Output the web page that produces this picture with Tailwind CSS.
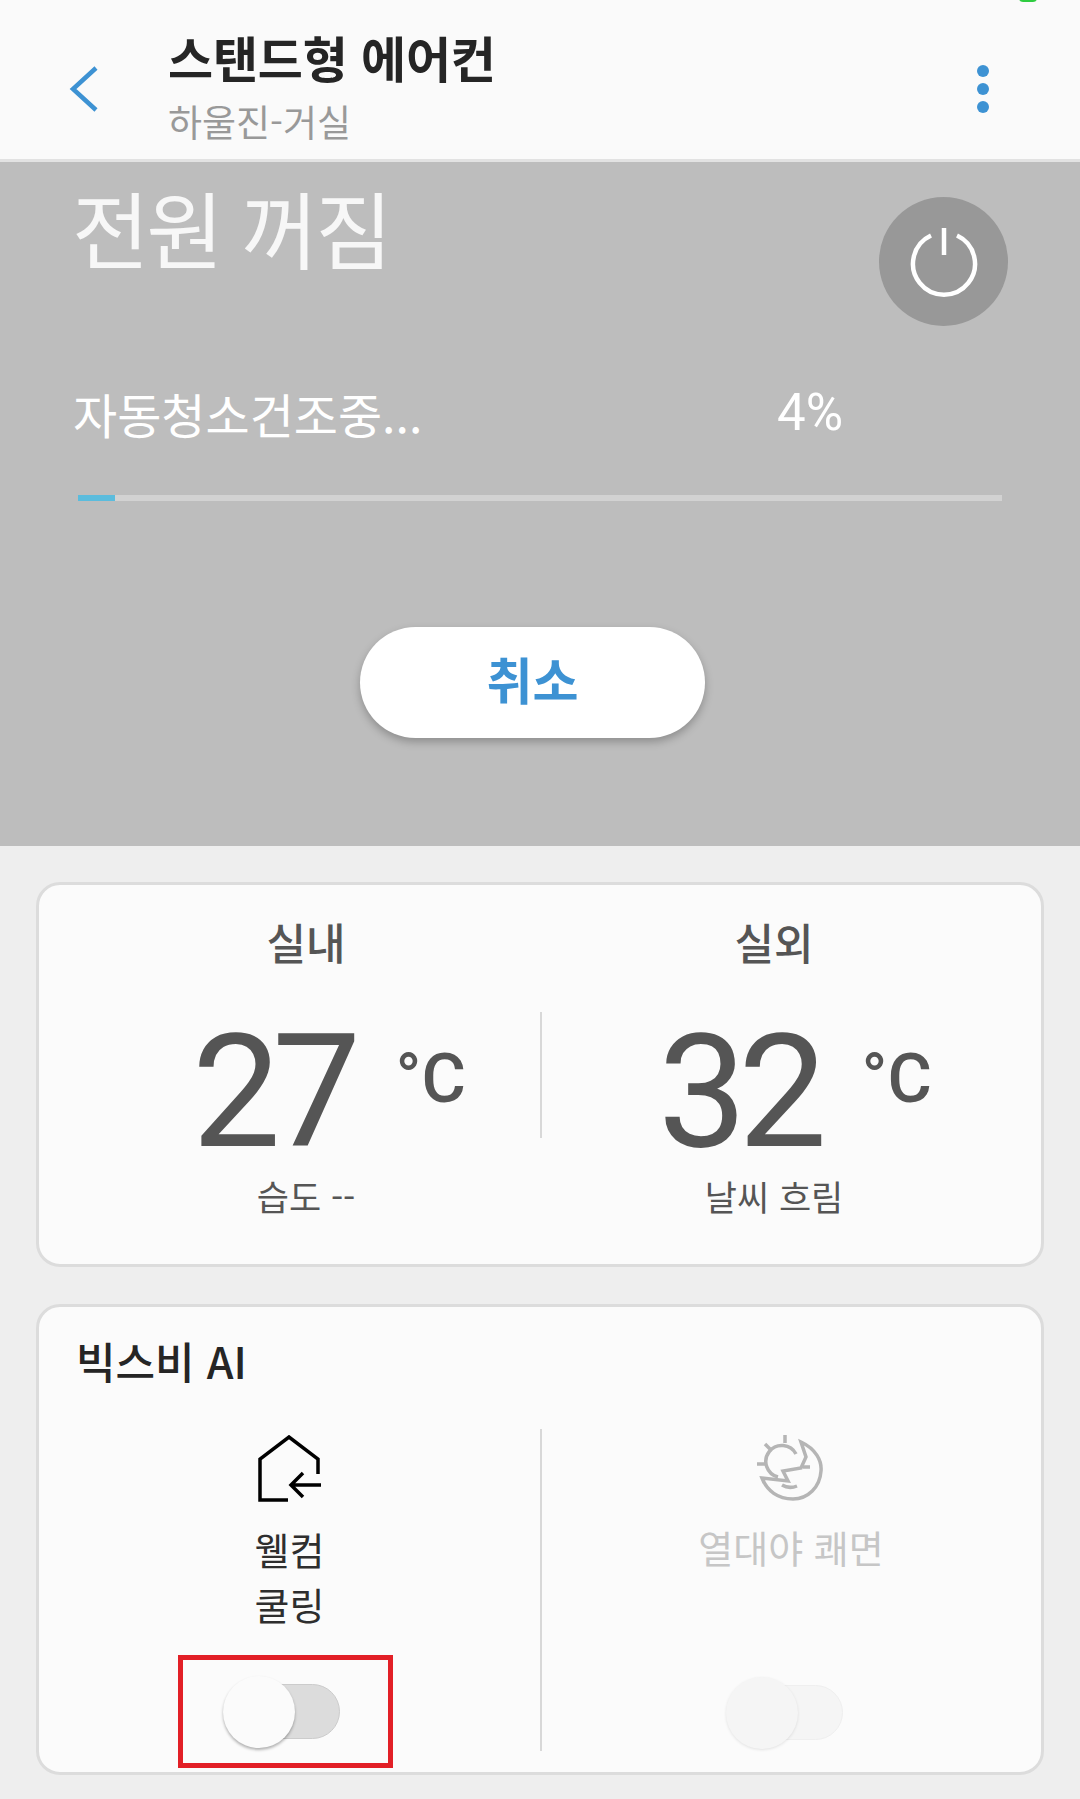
<!DOCTYPE html>
<html lang="ko">
<head>
    <meta charset="UTF-8">
    <meta name="viewport" content="width=device-width, initial-scale=1.0">
    <title>스탠드형 에어컨</title>
    <script src="https://cdn.jsdelivr.net/npm/@tailwindcss/browser@4"></script>
</head>
<body class="w-[1080px] h-[1799px] overflow-hidden bg-[#eeeeee] font-['Noto_Sans_CJK_KR','Noto_Sans',sans-serif]">

    <!-- header -->
    <header class="relative h-[162px] bg-[#fafafa] border-b-[3px] border-[#e2e2e2] flex items-start">
        <div class="absolute left-[1019px] top-[-6px] w-[18px] h-[8px] rounded-full bg-[#2ecc40]"></div>
        <svg class="mt-[66px] ml-[68px] w-[32px] h-[46px]" viewBox="0 0 32 46" fill="none" stroke="#3d92d3" stroke-width="4.5">
            <path d="M28 2 L5 23 L28 44" />
        </svg>
        <div class="ml-[68px] pt-[25px]">
            <div class="text-[49px] leading-[64px] font-bold tracking-[-0.2px] text-[#252525]">스탠드형 에어컨</div>
            <div class="mt-[10px] text-[37px] leading-[44px] text-[#999999]">하울진-거실</div>
        </div>
        <div class="ml-auto mr-[91px] mt-[65px] flex flex-col gap-[6px]">
            <div class="w-[12px] h-[12px] rounded-full bg-[#3d92d3]"></div>
            <div class="w-[12px] h-[12px] rounded-full bg-[#3d92d3]"></div>
            <div class="w-[12px] h-[12px] rounded-full bg-[#3d92d3]"></div>
        </div>
    </header>

    <!-- status band -->
    <section class="h-[684px] bg-[#bdbdbd] pl-[76px] pr-[72px] pt-[35px]">
        <div class="flex justify-between items-start">
            <div class="-ml-[4px] -mt-[8px] text-[84px] leading-[76px] tracking-[-3px] text-[#f7f7f7]">전원 꺼짐</div>
            <div class="w-[129px] h-[129px] rounded-full bg-[#989898] flex items-center justify-center">
                <svg class="mt-[3px] w-[70px] h-[70px]" viewBox="0 0 70 70" fill="none" stroke="#ffffff" stroke-width="4.5">
                    <path d="M22 7.5 A31 31 0 1 0 48 7.5" />
                    <path d="M35 0 L35 27" />
                </svg>
            </div>
        </div>
        <div class="mt-[57px] flex items-center text-[48px] leading-[60px] text-[#ffffff]">
            <span class="w-[704px] -ml-[3px]">자동청소건조중...</span>
            <span class="font-['Roboto',sans-serif] text-[51px]">4%</span>
        </div>
        <div class="mt-[52px] ml-[2px] w-[924px] h-[6px] bg-[#d2d2d2]">
            <div class="w-[37px] h-[6px] bg-[#5bbcdd]"></div>
        </div>
        <div class="mt-[126px] ml-[284px] pb-[8px] w-[345px] h-[111px] rounded-full bg-white shadow-[0_4px_8px_rgba(0,0,0,0.25)] flex items-center justify-center text-[50px] font-bold text-[#3d92d3]">취소</div>
    </section>

    <main class="px-[36px] pt-[36px] flex flex-col gap-[37px]">
        <!-- temperature -->
        <div class="h-[385px] rounded-[24px] border-[3px] border-[#dcdcdc] bg-[#fbfbfb] pt-[30px] text-[#555555]">
            <div class="grid grid-cols-[501px_2px_498px] text-[43px] leading-[52px] font-medium text-center">
                <div class="pl-[33px]">실내</div>
                <div></div>
                <div class="pr-[34px]">실외</div>
            </div>
            <div class="mt-[45px] h-[126px] grid grid-cols-[501px_2px_498px] grid-rows-[126px]">
                <div class="pl-[153px] flex items-start font-['Roboto',sans-serif]">
                    <span class="mt-[25px] text-[158px] leading-[110px] tracking-[-8.5px]">27</span>
                    <span class="ml-[43px] mt-[27px] text-[68px] leading-[80px] font-medium">°C</span>
                </div>
                <div class="bg-[#d8d8d8]"></div>
                <div class="pl-[116px] flex items-start font-['Roboto',sans-serif]">
                    <span class="mt-[25px] text-[158px] leading-[110px] tracking-[-8.5px]">32</span>
                    <span class="ml-[43px] mt-[27px] text-[68px] leading-[80px] font-medium">°C</span>
                </div>
            </div>
            <div class="mt-[34px] grid grid-cols-[501px_2px_498px] text-[35px] leading-[48px] text-center">
                <div class="pl-[33px]">습도 --</div>
                <div></div>
                <div class="pr-[34px]">날씨 흐림</div>
            </div>
        </div>

        <!-- bixby ai -->
        <div class="h-[471px] rounded-[24px] border-[3px] border-[#dcdcdc] bg-[#fbfbfb] pt-[27px]">
            <div class="pl-[37px] text-[43px] leading-[52px] font-medium text-[#252525]">빅스비 AI</div>
            <div class="mt-[43px] h-[322px] grid grid-cols-[501px_2px_498px] grid-rows-[322px]">
                <div class="flex flex-col items-center">
                    <svg class="shrink-0 mt-[6px] w-[66px] h-[68px]" viewBox="0 0 66 68" fill="none" stroke="#000000" stroke-width="3.5">
                        <path d="M31 65 L3 65 L3 24 L32 2 L61 24 L61 39" />
                        <path d="M64 50 L34 50 M46 38 L34 50 L46 62" />
                    </svg>
                    <div class="shrink-0 mt-[18px] text-[38px] leading-[55px] text-center text-[#2e2e2e]">웰컴<br>쿨링</div>
                    <div class="shrink-0 mt-[24px] -ml-[8px] pr-[8px] w-[215px] h-[113px] border-[5px] border-[#e21f26] flex items-center justify-center">
                        <div class="relative w-[117px] h-[72px]">
                            <div class="absolute right-0 top-[8px] w-[100px] h-[55px] rounded-full bg-[#dcdcdc] border border-[#cccccc]"></div>
                            <div class="absolute left-0 top-0 w-[72px] h-[72px] rounded-full bg-[#fbfbfb] shadow-[0_2px_3px_rgba(0,0,0,0.3)]"></div>
                        </div>
                    </div>
                </div>
                <div class="bg-[#d8d8d8]"></div>
                <div class="flex flex-col items-center">
                    <svg class="shrink-0 -mt-[10px] ml-[14px] w-[120px] h-[90px]" viewBox="0 0 120 90" fill="none" stroke="#b5b5b5" stroke-width="3.5">
                        <path d="M47 16 L47 24 M19 45 L27 45 M27 25 L33 31" />
                        <path d="M58 35 A16 16 0 1 0 40 58" />
                        <path d="M63 23 C78 30 84 42 83 52 C82 68 70 80 55 80 C40 80 29 72 24 59 L50 62 L45 52 L63 49 L68 38 Z" />
                        <path d="M65 48 L72 48 M44 66 C49 69 54 69 59 67" />
                    </svg>
                    <div class="mt-[10px] text-[38px] leading-[55px] text-center text-[#c6c6c6]">열대야 쾌면</div>
                    <div class="shrink-0 mt-[103px] -ml-[14px] relative w-[117px] h-[72px]">
                        <div class="absolute right-0 top-[8px] w-[100px] h-[55px] rounded-full bg-[#f5f5f5] border border-[#efefef]"></div>
                        <div class="absolute left-0 top-0 w-[72px] h-[72px] rounded-full bg-[#f5f5f5] shadow-[0_1px_3px_rgba(0,0,0,0.1)]"></div>
                    </div>
                </div>
            </div>
        </div>
    </main>
</body>
</html>
